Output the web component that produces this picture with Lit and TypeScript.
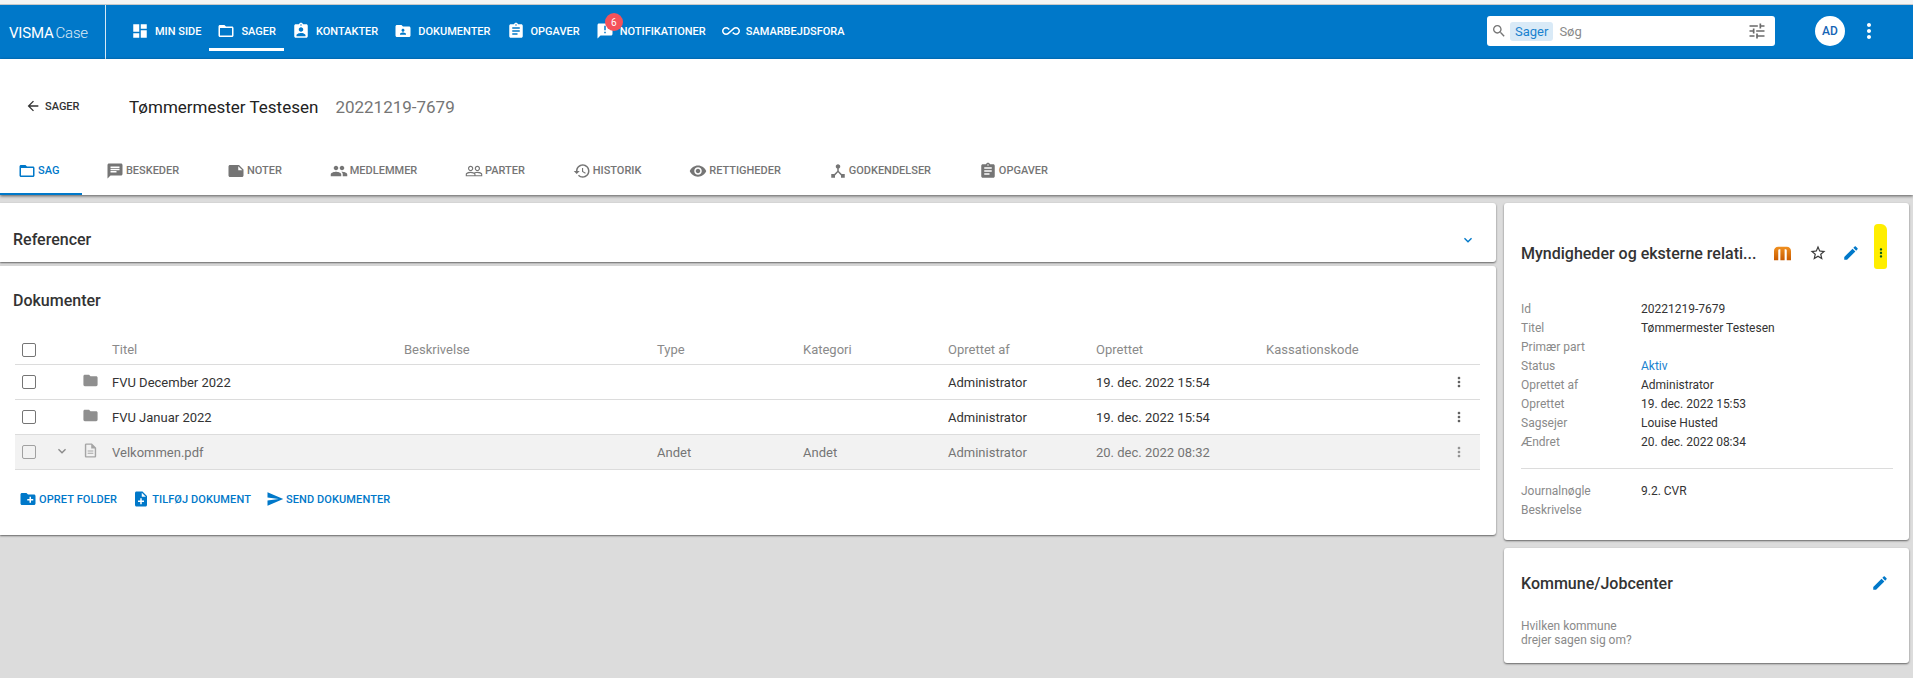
import { LitElement, html, css, svg } from 'lit'
import { customElement } from 'lit/decorators.js'

const P = {
  dashboard: 'M3 13h8V3H3v10zm0 8h8v-6H3v6zm10 0h8V11h-8v10zm0-18v6h8V3h-8z',
  folderOpen: 'M20 6h-8l-2-2H4c-1.1 0-1.99.9-1.99 2L2 18c0 1.1.9 2 2 2h16c1.1 0 2-.9 2-2V8c0-1.1-.9-2-2-2zm0 12H4V8h16v10z',
  contact: 'M19 3h-4.18C14.4 1.84 13.3 1 12 1c-1.3 0-2.4.84-2.82 2H5c-1.1 0-2 .9-2 2v14c0 1.1.9 2 2 2h14c1.1 0 2-.9 2-2V5c0-1.1-.9-2-2-2zm-7 0c.55 0 1 .45 1 1s-.45 1-1 1-1-.45-1-1 .45-1 1-1zm0 4c1.66 0 3 1.34 3 3s-1.34 3-3 3-3-1.34-3-3 1.34-3 3-3zm6 12H6v-1.4c0-2 4-3.1 6-3.1s6 1.1 6 3.1V19z',
  folderShared: 'M20 6h-8l-2-2H4c-1.1 0-1.99.9-1.99 2L2 18c0 1.1.9 2 2 2h16c1.1 0 2-.9 2-2V8c0-1.1-.9-2-2-2zm-8 3c1.1 0 2 .9 2 2s-.9 2-2 2-2-.9-2-2 .9-2 2-2zm4 8H8v-1c0-1.33 2.67-2 4-2s4 .67 4 2v1z',
  assignment: 'M19 3h-4.18C14.4 1.84 13.3 1 12 1c-1.3 0-2.4.84-2.82 2H5c-1.1 0-2 .9-2 2v14c0 1.1.9 2 2 2h14c1.1 0 2-.9 2-2V5c0-1.1-.9-2-2-2zm-7 0c.55 0 1 .45 1 1s-.45 1-1 1-1-.45-1-1 .45-1 1-1zm2 14H7v-2h7v2zm3-4H7v-2h10v2zm0-4H7V7h10v2z',
  announcement: 'M20 2H4c-1.1 0-1.99.9-1.99 2L2 22l4-4h14c1.1 0 2-.9 2-2V4c0-1.1-.9-2-2-2zm-7 9h-2V5h2v6zm0 4h-2v-2h2v2z',
  infinity: 'M18.6 6.62c-1.44 0-2.8.56-3.77 1.53L12 10.66 10.48 12h.01L7.8 14.39c-.64.64-1.49.99-2.4.99-1.87 0-3.39-1.51-3.39-3.38S3.53 8.62 5.4 8.62c.91 0 1.76.35 2.44 1.03l1.13 1 1.51-1.34L9.22 8.2C8.2 7.18 6.84 6.62 5.4 6.62 2.42 6.62 0 9.04 0 12s2.42 5.38 5.4 5.38c1.44 0 2.8-.56 3.77-1.53l2.83-2.5.01.01L13.52 12h-.01l2.69-2.39c.64-.64 1.49-.99 2.4-.99 1.87 0 3.39 1.51 3.39 3.38s-1.52 3.38-3.39 3.38c-.9 0-1.76-.35-2.44-1.03l-1.14-1.01-1.51 1.34 1.27 1.12c1.02 1.01 2.37 1.57 3.82 1.57 2.98 0 5.4-2.41 5.4-5.38s-2.42-5.37-5.4-5.37z',
  search: 'M15.5 14h-.79l-.28-.27C15.41 12.59 16 11.11 16 9.5 16 5.91 13.09 3 9.5 3S3 5.91 3 9.5 5.91 16 9.5 16c1.61 0 3.09-.59 4.23-1.57l.27.28v.79l5 4.99L20.49 19l-4.99-5zm-6 0C7.01 14 5 11.99 5 9.5S7.01 5 9.5 5 14 7.01 14 9.5 11.99 14 9.5 14z',
  tune: 'M3 17v2h6v-2H3zM3 5v2h10V5H3zm10 16v-2h8v-2h-8v-2h-2v6h2zM7 9v2H3v2h4v2h2V9H7zm14 4v-2H11v2h10zm-6-4h2V7h4V5h-4V3h-2v6z',
  more: 'M12 8c1.1 0 2-.9 2-2s-.9-2-2-2-2 .9-2 2 .9 2 2 2zm0 2c-1.1 0-2 .9-2 2s.9 2 2 2 2-.9 2-2-.9-2-2-2zm0 6c-1.1 0-2 .9-2 2s.9 2 2 2 2-.9 2-2-.9-2-2-2z',
  back: 'M20 11H7.83l5.59-5.59L12 4l-8 8 8 8 1.41-1.41L7.83 13H20v-2z',
  message: 'M20 2H4c-1.1 0-1.99.9-1.99 2L2 22l4-4h14c1.1 0 2-.9 2-2V4c0-1.1-.9-2-2-2zM6 9h12v2H6V9zm8 5H6v-2h8v2zm4-6H6V6h12v2z',
  note: 'M4 4c-1.1 0-2 .9-2 2v12c0 1.1.9 2 2 2h16c1.1 0 2-.9 2-2V10l-6-6H4zm11 7V5.5L20.5 11H15z',
  people: 'M16 11c1.66 0 2.99-1.34 2.99-3S17.66 5 16 5c-1.66 0-3 1.34-3 3s1.34 3 3 3zm-8 0c1.66 0 2.99-1.34 2.99-3S9.66 5 8 5C6.34 5 5 6.34 5 8s1.34 3 3 3zm0 2c-2.33 0-7 1.17-7 3.5V19h14v-2.5c0-2.33-4.67-3.5-7-3.5zm8 0c-.29 0-.62.02-.97.05 1.16.84 1.97 1.97 1.97 3.45V19h6v-2.5c0-2.33-4.67-3.5-7-3.5z',
  peopleOutline: 'M16.5 13c-1.2 0-3.07.34-4.5 1-1.43-.67-3.3-1-4.5-1C5.33 13 1 14.08 1 16.25V19h22v-2.75c0-2.17-4.33-3.25-6.5-3.25zm-4 4.5h-10v-1.25c0-.54 2.56-1.75 5-1.75s5 1.21 5 1.75v1.25zm9 0H14v-1.25c0-.46-.2-.86-.52-1.22.88-.3 1.96-.53 3.02-.53 2.44 0 5 1.21 5 1.75v1.25zM7.5 12c1.93 0 3.5-1.57 3.5-3.5S9.43 5 7.5 5 4 6.57 4 8.5 5.57 12 7.5 12zm0-5.5c1.1 0 2 .9 2 2s-.9 2-2 2-2-.9-2-2 .9-2 2-2zm9 5.5c1.93 0 3.5-1.57 3.5-3.5S18.43 5 16.5 5 13 6.57 13 8.5s1.57 3.5 3.5 3.5zm0-5.5c1.1 0 2 .9 2 2s-.9 2-2 2-2-.9-2-2 .9-2 2-2z',
  history: 'M13 3c-4.97 0-9 4.03-9 9H1l3.89 3.89.07.14L9 12H6c0-3.87 3.13-7 7-7s7 3.13 7 7-3.13 7-7 7c-1.93 0-3.68-.79-4.94-2.06l-1.42 1.42C8.27 19.99 10.51 21 13 21c4.97 0 9-4.03 9-9s-4.03-9-9-9zm-1 5v5l4.28 2.54.72-1.21-3.5-2.08V8H12z',
  eye: 'M12 4.5C7 4.5 2.73 7.61 1 12c1.73 4.39 6 7.5 11 7.5s9.27-3.11 11-7.5c-1.73-4.39-6-7.5-11-7.5zM12 17c-2.76 0-5-2.24-5-5s2.24-5 5-5 5 2.24 5 5-2.24 5-5 5zm0-8c-1.66 0-3 1.34-3 3s1.34 3 3 3 3-1.34 3-3-1.34-3-3-3z',
  hub: 'M17 16l-4-4V8.82C14.16 8.4 15 7.3 15 6c0-1.66-1.34-3-3-3S9 4.34 9 6c0 1.3.84 2.4 2 2.82V12l-4 4H3v5h5v-3.05l4-4.2 4 4.2V21h5v-5h-4z',
  chevron: 'M16.59 8.59L12 13.17 7.41 8.59 6 10l6 6 6-6z',
  folder: 'M10 4H4c-1.1 0-1.99.9-1.99 2L2 18c0 1.1.9 2 2 2h16c1.1 0 2-.9 2-2V8c0-1.1-.9-2-2-2h-8l-2-2z',
  doc: 'M14 2H6c-1.1 0-1.99.9-1.99 2L4 20c0 1.1.89 2 1.99 2H18c1.1 0 2-.9 2-2V8l-6-6zm4 18H6V4h7v5h5v11zM8 12h8v1.5H8zm0 3h8v1.5H8z',
  newFolder: 'M20 6h-8l-2-2H4c-1.11 0-1.99.89-1.99 2L2 18c0 1.11.89 2 2 2h16c1.11 0 2-.89 2-2V8c0-1.11-.89-2-2-2zm-1 8h-3v3h-2v-3h-3v-2h3V9h2v3h3v2z',
  noteAdd: 'M14 2H6c-1.1 0-1.99.9-1.99 2L4 20c0 1.1.89 2 1.99 2H18c1.1 0 2-.9 2-2V8l-6-6zm2 14h-3v3h-2v-3H8v-2h3v-3h2v3h3v2zm-3-7V3.5L18.5 9H13z',
  send: 'M2.01 21L23 12 2.01 3 2 10l15 2-15 2z',
  star: 'M22 9.24l-7.19-.62L12 2 9.19 8.63 2 9.24l5.46 4.73L5.82 21 12 17.27 18.18 21l-1.63-7.03L22 9.24zM12 15.4l-3.76 2.27 1-4.28-3.32-2.88 4.38-.38L12 6.1l1.71 4.04 4.38.38-3.32 2.88 1 4.28L12 15.4z',
  edit: 'M3 17.25V21h3.75L17.81 9.94l-3.75-3.75L3 17.25zM20.71 7.04c.39-.39.39-1.02 0-1.41l-2.34-2.34c-.39-.39-1.02-.39-1.41 0l-1.83 1.83 3.75 3.75 1.83-1.83z',
}

const icon = (d: string, size = 18) =>
  html`<svg class="ic" width=${size} height=${size} viewBox="0 0 24 24" fill="currentColor">${svg`<path d=${d}></path>`}</svg>`

const navItems = [
  { d: P.dashboard, label: 'Min side' },
  { d: P.folderOpen, label: 'Sager', active: true },
  { d: P.contact, label: 'Kontakter' },
  { d: P.folderShared, label: 'Dokumenter' },
  { d: P.assignment, label: 'Opgaver' },
  { d: P.announcement, label: 'Notifikationer', badge: '6' },
  { d: P.infinity, label: 'Samarbejdsfora' },
]

const tabs = [
  { d: P.folderOpen, label: 'Sag', active: true },
  { d: P.message, label: 'Beskeder' },
  { d: P.note, label: 'Noter' },
  { d: P.people, label: 'Medlemmer' },
  { d: P.peopleOutline, label: 'Parter' },
  { d: P.history, label: 'Historik' },
  { d: P.eye, label: 'Rettigheder' },
  { d: P.hub, label: 'Godkendelser' },
  { d: P.assignment, label: 'Opgaver' },
]

const rows = [
  { kind: 'folder', title: 'FVU December 2022', type: '', cat: '', by: 'Administrator', date: '19. dec. 2022 15:54' },
  { kind: 'folder', title: 'FVU Januar 2022', type: '', cat: '', by: 'Administrator', date: '19. dec. 2022 15:54' },
  { kind: 'doc', title: 'Velkommen.pdf', type: 'Andet', cat: 'Andet', by: 'Administrator', date: '20. dec. 2022 08:32' },
]

const details = [
  ['Id', '20221219-7679'],
  ['Titel', 'Tømmermester Testesen'],
  ['Primær part', ''],
  ['Status', 'Aktiv'],
  ['Oprettet af', 'Administrator'],
  ['Oprettet', '19. dec. 2022 15:53'],
  ['Sagsejer', 'Louise Husted'],
  ['Ændret', '20. dec. 2022 08:34'],
]

@customElement('app-root')
export class AppRoot extends LitElement {
  render() {
    return html`
      <div class="strip"></div>
      <header class="bar">
        <div class="logo"><span>VISMA</span><span class="case">Case</span></div>
        <nav class="nav">
          ${navItems.map(
            (n) => html`<a class="nav-item ${n.active ? 'active' : ''}">
              ${icon(n.d)}<span>${n.label}</span>
              ${n.badge ? html`<b class="badge">${n.badge}</b>` : ''}
            </a>`,
          )}
        </nav>
        <div class="search">
          <span class="s-ic">${icon(P.search, 16)}</span>
          <span class="chip">Sager</span>
          <span class="s-text">Søg</span>
          <span class="s-tune">${icon(P.tune, 20)}</span>
        </div>
        <div class="avatar">AD</div>
        <span class="bar-more">${icon(P.more, 24)}</span>
      </header>

      <section class="head">
        <div class="crumb">
          <a class="back">${icon(P.back, 16)}<span>Sager</span></a>
          <h1>Tømmermester Testesen</h1>
          <span class="case-no">20221219-7679</span>
        </div>
        <div class="tabs">
          ${tabs.map(
            (t) => html`<a class="tab ${t.active ? 'active' : ''}">${icon(t.d, 18)}<span>${t.label}</span></a>`,
          )}
        </div>
      </section>

      <main class="page">
        <div class="col">
          <section class="card refs">
            <h2>Referencer</h2>
            <span class="blue">${icon(P.chevron, 16)}</span>
          </section>
          <section class="card docs">
            <h2>Dokumenter</h2>
            <div class="table">
              <div class="tr th">
                <span class="check"></span><span></span><span></span>
                <span>Titel</span><span>Beskrivelse</span><span>Type</span><span>Kategori</span>
                <span>Oprettet af</span><span>Oprettet</span><span>Kassationskode</span><span></span>
              </div>
              ${rows.map(
                (r) => html`<div class="tr ${r.kind === 'doc' ? 'muted' : ''}">
                  <span class="check"></span>
                  <span class="exp">${r.kind === 'doc' ? icon(P.chevron, 16) : ''}</span>
                  <span class="kind">${icon(r.kind === 'doc' ? P.doc : P.folder, 17)}</span>
                  <span>${r.title}</span><span></span><span>${r.type}</span><span>${r.cat}</span>
                  <span>${r.by}</span><span>${r.date}</span><span></span>
                  <span class="row-more">${icon(P.more, 16)}</span>
                </div>`,
              )}
            </div>
            <div class="actions">
              <a class="action">${icon(P.newFolder, 18)}<span>Opret folder</span></a>
              <a class="action">${icon(P.noteAdd, 18)}<span>Tilføj dokument</span></a>
              <a class="action">${icon(P.send, 18)}<span>Send dokumenter</span></a>
            </div>
          </section>
        </div>

        <aside class="col side">
          <section class="card info">
            <div class="info-head">
              <h2>Myndigheder og eksterne relati...</h2>
              <svg class="mlogo" width="17" height="15" viewBox="0 0 20 16">
                <defs>
                  <linearGradient id="mg" x1="0" x2="0" y1="0" y2="1">
                    <stop offset="0" stop-color="#f09020"></stop>
                    <stop offset="1" stop-color="#c85a00"></stop>
                  </linearGradient>
                </defs>
                <path fill="url(#mg)" d="M0 16V5C0 2 2 0 5 0h10c3 0 5 2 5 5v11h-5V4.500C15 3.500 14.400 3 13.500 3h-1v13H7.500V3h-1C5.600 3 5 3.500 5 4.500V16z"></path>
              </svg>
              <span class="star">${icon(P.star, 18)}</span>
              <span class="blue pen">${icon(P.edit, 18)}</span>
              <span class="marker">${icon(P.more, 14)}</span>
            </div>
            <dl class="dl">
              ${details.map(
                ([k, v]) => html`<dt>${k}</dt><dd class=${k === 'Status' ? 'link' : ''}>${v}</dd>`,
              )}
            </dl>
            <hr />
            <dl class="dl second">
              <dt>Journalnøgle</dt><dd>9.2. CVR</dd>
              <dt>Beskrivelse</dt><dd></dd>
            </dl>
          </section>
          <section class="card kommune">
            <div class="k-head">
              <h2>Kommune/Jobcenter</h2>
              <span class="blue">${icon(P.edit, 18)}</span>
            </div>
            <p>Hvilken kommune<br />drejer sagen sig om?</p>
          </section>
        </aside>
      </main>
    `
  }

  static styles = css`
    :host {
      display: block;
      min-height: 100vh;
      background: #dcdcdc;
      font-family: Roboto, 'Liberation Sans', sans-serif;
      font-size: 12px;
      color: #333;
    }
    * { box-sizing: border-box; }
    .ic { display: block; flex: none; }
    h1, h2, p, dl, dd { margin: 0; }

    .strip { height: 5px; background: #f4f4f4; border-bottom: 1px solid #c8c8c8; }
    .bar { height: 54px; background: #0078c9; color: #fff; display: flex; align-items: center; }
    .logo {
      width: 106px; height: 54px; border-right: 1px solid #d5e8f5;
      display: flex; align-items: center; padding: 2px 0 0 9px;
      font-size: 15px; font-weight: 400; letter-spacing: -.2px;
    }
    .case { font-weight: 300; margin-left: 2px; opacity: .85; }
    .nav { display: flex; margin-left: 17px; height: 54px; }
    .nav-item {
      position: relative; display: flex; align-items: center; gap: 6px; padding: 0 8px;
      height: 54px; padding-bottom: 2px;
      font-size: 11px; font-weight: 500; text-transform: uppercase; white-space: nowrap;
    }
    .nav-item.active::after {
      content: ''; position: absolute; left: 0; right: 0; bottom: 8px; height: 3px; background: #fff;
    }
    .badge {
      position: absolute; left: 17px; top: 8px; width: 18px; height: 18px; border-radius: 50%;
      background: #f4525a; color: #fff; font-size: 10px; font-weight: 400;
      display: flex; align-items: center; justify-content: center;
    }
    .search {
      margin-left: auto; width: 288px; height: 30px; margin-top: -2px; background: #fff; border-radius: 3px;
      display: flex; align-items: center; padding: 0 8px 0 4px; font-size: 13px; color: #8a8a8a;
    }
    .s-ic { color: #757575; }
    .chip {
      margin-left: 3px; background: #d9eaf7; color: #1a82cf; border-radius: 3px; padding: 2px 5px; line-height: 15px;
    }
    .s-text { margin-left: 6px; }
    .s-tune { margin-left: auto; color: #6a6a6a; }
    .avatar {
      margin-left: 40px; width: 30px; height: 30px; margin-top: -2px; border-radius: 50%; background: #fff; color: #1565b5;
      display: flex; align-items: center; justify-content: center; font-size: 12px; font-weight: 500;
    }
    .bar-more { margin: -2px 32px 0 12px; }

    .head { background: #fff; height: 136px; box-shadow: 0 1px 3px rgba(0,0,0,.6); position: relative; display: flex; flex-direction: column; }
    .crumb { height: 102px; display: flex; align-items: center; padding: 0 0 8px 25px; }
    .back { display: flex; align-items: center; gap: 4px; font-size: 11px; font-weight: 500; text-transform: uppercase; width: 104px; }
    h1 { font-size: 17px; font-weight: 400; color: #222; margin-top: 1px; }
    .case-no { margin: 1px 0 0 17px; font-size: 17px; color: #757575; }
    .tabs { display: flex; height: 34px; }
    .tab {
      display: flex; align-items: flex-start; gap: 2px; padding: 1px 23.900px 0; color: #757575;
      font-size: 11px; font-weight: 500; text-transform: uppercase; white-space: nowrap;
    }
    .tab span { line-height: 18px; }
    .tab.active { color: #0078c9; width: 82px; padding: 1px 0 0 18px; border-bottom: 2px solid #0078c9; }

    .page { display: grid; grid-template-columns: minmax(0, 1fr) 405px; gap: 8px; padding: 8px 4px 15px 0; }
    .col { display: flex; flex-direction: column; gap: 4px; }
    .side { gap: 8px; }
    .card { background: #fff; box-shadow: 0 1px 2px rgba(0,0,0,.55); border-radius: 0 3px 3px 0; }
    .side .card { border-radius: 3px; }
    h2 { font-size: 16px; font-weight: 500; color: #333; }
    .blue { color: #0078c9; }

    .refs { height: 59px; display: flex; align-items: center; justify-content: space-between; padding: 14px 20px 0 13px; }
    .docs { height: 269px; padding: 26px 16px 0 15px; }
    .docs h2 { margin-left: -2px; line-height: 18px; }
    .table { margin-top: 24px; font-size: 13px; }
    .tr {
      display: grid; grid-template-columns: 30px 20px 40px 292px 253px 146px 145px 148px 170px 180px 1fr;
      align-items: center; height: 35px; padding-left: 7px; border-bottom: 1px solid #dcdcdc;
    }
    .th { color: #8a8a8a; height: 31px; font-size: 13px; padding-top: 1px; }
    .check { width: 14px; height: 14px; border: 1.500px solid #757575; border-radius: 2px; display: block; }
    .exp { color: #8a8a8a; margin-left: 2px; margin-top: -3px; }
    .kind { color: #8f8f8f; margin-left: 10px; margin-top: -3px; }
    .row-more { color: #5f5f5f; margin-left: 5px; }
    .muted { background: #f2f2f2; color: #757575; }
    .muted .check, .muted .row-more { opacity: .65; }
    .muted .kind { color: #a5a5a5; }
    .actions { display: flex; gap: 15px; margin: 20px 0 0 4px; }
    .action {
      display: flex; align-items: center; gap: 2px; color: #0078c9; letter-spacing: .1px;
      font-size: 11px; font-weight: 500; text-transform: uppercase; white-space: nowrap;
    }

    .info { height: 337px; padding: 19px 16px 0 17px; }
    .info-head { display: flex; align-items: center; height: 62px; }
    .info-head h2 { width: 240px; white-space: nowrap; }
    .mlogo { margin-left: 13px; }
    .star { margin-left: 18px; color: #3a3a3a; }
    .pen { margin-left: 15px; }
    .marker {
      position: relative; top: -7px; margin-left: 14px; width: 13px; height: 45px; padding-top: 14px;
      background: #ffee00; color: #0a5a1a;
      border-radius: 4px 6px 3px 3px; display: flex; align-items: center; justify-content: center;
    }
    .dl { display: grid; grid-template-columns: 120px 1fr; grid-auto-rows: 19px; margin-top: 15px; align-items: center; }
    dt { color: #8a8a8a; }
    dd { color: #333; }
    dd.link { color: #1a82cf; }
    hr { border: 0; border-top: 1px solid #dcdcdc; margin: 17px 0 12px; }
    .second { margin-top: 0; }

    .kommune { height: 115px; padding: 25px 17px 0 17px; }
    .k-head { display: flex; align-items: center; justify-content: space-between; padding-right: 3px; height: 20px; }
    .kommune p { margin-top: 26px; color: #8a8a8a; line-height: 14px; }
  `
}
